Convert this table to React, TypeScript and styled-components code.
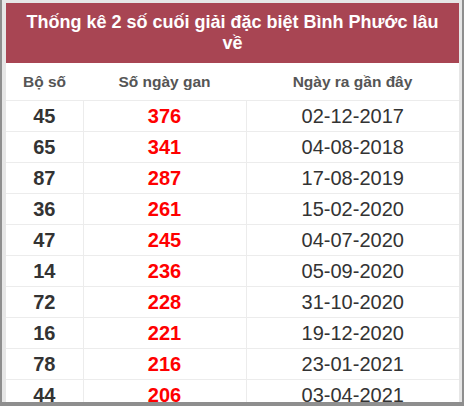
import React from "react";
import styled, { createGlobalStyle } from "styled-components";

const Global = createGlobalStyle`
  html, body { margin: 0; padding: 0; background: #e6e6e6; }
  body { font-family: "Liberation Sans", Arial, sans-serif; }
`;

const Frame = styled.div`
  box-sizing: border-box;
  width: 464px;
  height: 406px;
  border-style: solid;
  border-color: #8e8e8e;
  border-width: 0 2px 4px 2px;
  padding: 3px 3px 0 4px;
  background: #e6e6e6;
  overflow: hidden;
`;

const Panel = styled.div`
  background: #fff;
  height: 100%;
  overflow: hidden;
`;

const Title = styled.div`
  box-sizing: border-box;
  height: 60px;
  background: #a84553;
  color: #fff;
  font-weight: bold;
  font-size: 18px;
  line-height: 21px;
  text-align: center;
  padding: 9px 20px 0;
`;

const Table = styled.table`
  width: 453px;
  border-collapse: collapse;
  table-layout: fixed;
`;

const Head = styled.th`
  height: 37px;
  padding: 0;
  font-size: 15.5px;
  font-weight: bold;
  color: #555;
  text-align: center;
  border-bottom: 1px solid #ececec;
`;

const Cell = styled.td<{ $kind: "num" | "gan" | "date" }>`
  height: 30px;
  padding: 0;
  font-size: 20px;
  text-align: center;
  border-bottom: 1px solid #ececec;
  border-left: 1px solid #ececec;
  &:first-child { border-left: none; }
  font-weight: ${(p) => (p.$kind === "date" ? "normal" : "bold")};
  color: ${(p) => (p.$kind === "gan" ? "#ff0000" : "#333")};
`;

const rows: [string, string, string][] = [
  ["45", "376", "02-12-2017"],
  ["65", "341", "04-08-2018"],
  ["87", "287", "17-08-2019"],
  ["36", "261", "15-02-2020"],
  ["47", "245", "04-07-2020"],
  ["14", "236", "05-09-2020"],
  ["72", "228", "31-10-2020"],
  ["16", "221", "19-12-2020"],
  ["78", "216", "23-01-2021"],
  ["44", "206", "03-04-2021"],
];

export default function App() {
  return (
    <>
      <Global />
      <Frame>
        <Panel>
          <Title>Thống kê 2 số cuối giải đặc biệt Bình Phước lâu về</Title>
          <Table>
            <colgroup>
              <col style={{ width: 77 }} />
              <col style={{ width: 163 }} />
              <col style={{ width: 213 }} />
            </colgroup>
            <thead>
              <tr>
                <Head>Bộ số</Head>
                <Head>Số ngày gan</Head>
                <Head>Ngày ra gần đây</Head>
              </tr>
            </thead>
            <tbody>
              {rows.map((r) => (
                <tr key={r[0]}>
                  <Cell $kind="num">{r[0]}</Cell>
                  <Cell $kind="gan">{r[1]}</Cell>
                  <Cell $kind="date">{r[2]}</Cell>
                </tr>
              ))}
            </tbody>
          </Table>
        </Panel>
      </Frame>
    </>
  );
}
